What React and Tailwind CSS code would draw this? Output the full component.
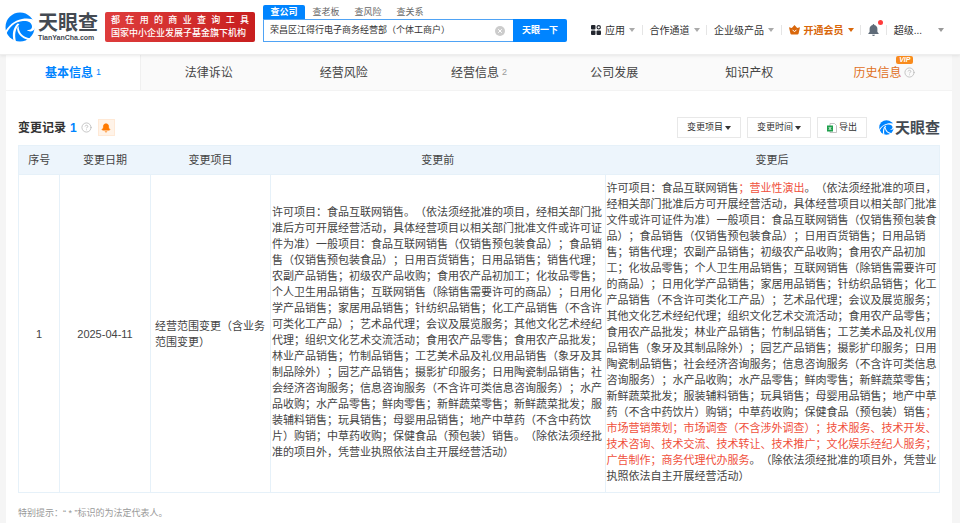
import { Bell, CircleHelp } from 'lucide-react';

const searchTabs = ['查公司', '查老板', '查风险', '查关系'];

const sectionTabs = [
  { label: '基本信息', count: 1, active: true },
  { label: '法律诉讼' },
  { label: '经营风险' },
  { label: '经营信息', count: 2 },
  { label: '公司发展' },
  { label: '知识产权' },
  { label: '历史信息', vip: true }
];

const records = [
  {
    id: 1,
    date: '2025-04-11',
    item: '经营范围变更（含业务范围变更）',
    before:
      '许可项目：食品互联网销售。（依法须经批准的项目，经相关部门批准后方可开展经营活动，具体经营项目以相关部门批准文件或许可证件为准）一般项目：食品互联网销售（仅销售预包装食品）；食品销售（仅销售预包装食品）；日用百货销售；日用品销售；销售代理；农副产品销售；初级农产品收购；食用农产品初加工；化妆品零售；个人卫生用品销售；互联网销售（除销售需要许可的商品）；日用化学产品销售；家居用品销售；针纺织品销售；化工产品销售（不含许可类化工产品）；艺术品代理；会议及展览服务；其他文化艺术经纪代理；组织文化艺术交流活动；食用农产品零售；食用农产品批发；林业产品销售；竹制品销售；工艺美术品及礼仪用品销售（象牙及其制品除外）；园艺产品销售；摄影扩印服务；日用陶瓷制品销售；社会经济咨询服务；信息咨询服务（不含许可类信息咨询服务）；水产品收购；水产品零售；鲜肉零售；新鲜蔬菜零售；新鲜蔬菜批发；服装辅料销售；玩具销售；母婴用品销售；地产中草药（不含中药饮片）购销；中草药收购；保健食品（预包装）销售。（除依法须经批准的项目外，凭营业执照依法自主开展经营活动）',
    after: [
      { text: '许可项目：食品互联网销售' },
      { text: '；营业性演出', added: true },
      {
        text: '。（依法须经批准的项目，经相关部门批准后方可开展经营活动，具体经营项目以相关部门批准文件或许可证件为准）一般项目：食品互联网销售（仅销售预包装食品）；食品销售（仅销售预包装食品）；日用百货销售；日用品销售；销售代理；农副产品销售；初级农产品收购；食用农产品初加工；化妆品零售；个人卫生用品销售；互联网销售（除销售需要许可的商品）；日用化学产品销售；家居用品销售；针纺织品销售；化工产品销售（不含许可类化工产品）；艺术品代理；会议及展览服务；其他文化艺术经纪代理；组织文化艺术交流活动；食用农产品零售；食用农产品批发；林业产品销售；竹制品销售；工艺美术品及礼仪用品销售（象牙及其制品除外）；园艺产品销售；摄影扩印服务；日用陶瓷制品销售；社会经济咨询服务；信息咨询服务（不含许可类信息咨询服务）；水产品收购；水产品零售；鲜肉零售；新鲜蔬菜零售；新鲜蔬菜批发；服装辅料销售；玩具销售；母婴用品销售；地产中草药（不含中药饮片）购销；中草药收购；保健食品（预包装）销售'
      },
      {
        text: '；市场营销策划；市场调查（不含涉外调查）；技术服务、技术开发、技术咨询、技术交流、技术转让、技术推广；文化娱乐经纪人服务；广告制作；商务代理代办服务',
        added: true
      },
      { text: '。（除依法须经批准的项目外，凭营业执照依法自主开展经营活动）' }
    ]
  }
];

function LogoMark({ className }) {
  return (
    <svg viewBox="0 0 30 30" className={className} aria-hidden="true">
      <circle cx="15" cy="15" r="14.5" fill="#0084ff" />
      <path
        d="M1 23C4 15 10 9.5 18 9C23 8.6 26.5 10.5 27 14C27.3 17 25 18.6 22 18C24.5 20.6 29 19.5 30 16V9C27 6.5 22 6 17 7C9 8.6 3 14 0 20Z"
        fill="#fff"
      />
      <path d="M12.5 11.5C8 16 7 22 8.6 29L11 29.6C9.4 23 10 17 14.5 12Z" fill="#fff" />
      <path d="M13.6 14C13.6 20 17 25 25.4 26.4L24 28.2C16 26.4 11.8 21 12.2 16Z" fill="#fff" />
    </svg>
  );
}

function Caret({ className }) {
  return (
    <svg viewBox="0 0 6 4" className={`h-1 w-1.5 shrink-0 ${className}`} aria-hidden="true">
      <path d="M0 0h6L3 4z" fill="currentColor" />
    </svg>
  );
}

function Divider() {
  return <span className="h-2.5 w-px shrink-0 bg-[#e5e5e5]" />;
}

function Header() {
  return (
    <header className="relative flex h-[55px] items-end border-b border-[#eee] bg-white pr-4 pb-3 pl-[5px] shadow-[0_1px_3px_rgba(0,0,0,0.08)]">
      <a href="#" className="flex shrink-0 items-center gap-[3px]">
        <LogoMark className="size-[30px]" />
        <span className="flex w-[63px] flex-col">
          <span className="text-[20px] leading-5 font-bold text-[#444a52]">天眼查</span>
          <span className="font-['Liberation_Sans'] text-[7px] leading-[9px] font-bold text-[#444a52]">
            TianYanCha.com
          </span>
        </span>
      </a>

      <div className="ml-1 w-[150px] shrink-0 rounded-xs bg-linear-to-r from-[#de3c3c] to-[#c81e1e] px-1.5 py-0.5 text-[9px] leading-[13px] font-medium text-white">
        <p className="[text-align-last:justify]">都 在 用 的 商 业 查 询 工 具</p>
        <p className="whitespace-nowrap">国家中小企业发展子基金旗下机构</p>
      </div>

      <form className="ml-2 w-[304px] shrink-0" onSubmit={(event) => event.preventDefault()}>
        <div className="flex text-[9px] leading-[14px] text-[#666]">
          {searchTabs.map((tab, index) => (
            <button
              key={tab}
              type="button"
              className={`w-[42px] ${index === 0 ? 'rounded-t-xs bg-[#0084ff] font-bold text-white' : ''}`}
            >
              {tab}
            </button>
          ))}
        </div>
        <div className="flex h-[23px]">
          <div className="flex flex-1 items-center border border-r-0 border-[#4fa3f5] pr-2 pl-1.5">
            <input
              aria-label="搜索"
              defaultValue="荣昌区江得行电子商务经营部（个体工商户）"
              className="min-w-0 flex-1 text-[9px] text-[#333] outline-none"
            />
            <button type="button" aria-label="清空">
              <svg viewBox="0 0 10 10" className="size-2.5">
                <circle cx="5" cy="5" r="5" fill="#ccc" />
                <path d="M3.2 3.2l3.6 3.6M6.8 3.2L3.2 6.8" stroke="#fff" />
              </svg>
            </button>
          </div>
          <button type="submit" className="w-[54px] rounded-r-xs bg-[#0084ff] text-[9px] font-bold text-white">
            天眼一下
          </button>
        </div>
      </form>

      <nav className="ml-6 flex h-6 flex-1 items-center justify-between text-[10px] whitespace-nowrap text-[#333]">
        <button type="button" className="flex items-center gap-1">
          <svg viewBox="0 0 10 10" className="size-2.5" fill="#22262e" aria-hidden="true">
            <rect width="4.5" height="4.5" rx="1" />
            <rect y="5.5" width="4.5" height="4.5" rx="1" />
            <rect x="5.5" y="5.5" width="4.5" height="4.5" rx="1" />
            <circle cx="7.7" cy="2.3" r="1.7" fill="none" stroke="#22262e" strokeWidth="1.1" />
          </svg>
          应用
          <Caret className="text-[#aaa]" />
        </button>
        <Divider />
        <button type="button" className="flex items-center gap-1">
          合作通道
          <Caret className="text-[#aaa]" />
        </button>
        <Divider />
        <button type="button" className="flex items-center gap-1">
          企业级产品
          <Caret className="text-[#aaa]" />
        </button>
        <Divider />
        <button type="button" className="flex items-center gap-1 font-bold text-[#d9670b]">
          <svg viewBox="0 0 11 10" className="h-2.5 w-[11px]" aria-hidden="true">
            <path d="M0 2.2L2.8 3L5.5 0L8.2 3L11 2.2L9.6 8.6Q9.4 9.6 8.4 9.6H2.6Q1.6 9.6 1.4 8.6Z" fill="currentColor" />
            <path d="M3.6 4.8L5.5 6.8L7.4 4.8" fill="none" stroke="#fff" />
          </svg>
          开通会员
          <Caret />
        </button>
        <Divider />
        <button type="button" aria-label="消息" className="relative">
          <svg viewBox="0 0 11 12" className="h-3 w-[11px]" fill="#5f6b78" aria-hidden="true">
            <path d="M5.5 0C6 0 6.3.4 6.3.9C8.3 1.3 9.4 2.9 9.4 4.8V8L10.6 9.3V10H.4V9.3L1.6 8V4.8C1.6 2.9 2.7 1.3 4.7.9C4.7.4 5 0 5.5 0Z" />
            <path d="M4 10.8H7Q6.6 12 5.5 12Q4.4 12 4 10.8Z" />
          </svg>
          <span className="absolute -top-1 -right-1 size-[5px] rounded-full bg-[#ff3b3b]" />
        </button>
        <Divider />
        <button type="button" className="flex items-center gap-4">
          超级...
          <Caret className="text-[#999]" />
        </button>
      </nav>
    </header>
  );
}

function SectionTabs() {
  return (
    <nav className="grid h-9 grid-cols-7 border-b border-[#f3f3f3] bg-[#fafafa] text-[12px]">
      {sectionTabs.map((tab) => (
        <a
          key={tab.label}
          href="#"
          className={`flex items-center justify-center gap-[3px] ${
            tab.active ? 'border-r border-[#f0f0f0] bg-white font-bold' : ''
          } ${tab.vip ? 'text-[#e0701c]' : 'text-[#444]'}`}
        >
          <span className={`relative ${tab.active ? 'text-[#0084ff]' : ''}`}>
            {tab.label}
            {tab.vip ? (
              <span className="absolute -top-2 -right-3 rounded-xs bg-[#f98b1d] px-[3px] font-['Liberation_Sans'] text-[7px] leading-2 font-bold text-white italic">
                VIP
              </span>
            ) : null}
          </span>
          {tab.count ? (
            <span
              className={`font-['Liberation_Sans'] text-[9px] font-normal ${
                tab.active ? 'text-[#0084ff]' : 'text-[#999]'
              }`}
            >
              {tab.count}
            </span>
          ) : null}
          {tab.vip ? <CircleHelp className="size-[11px] text-[#bbb]" strokeWidth={1.8} /> : null}
        </a>
      ))}
    </nav>
  );
}

function FilterButton({ children }) {
  return (
    <button
      type="button"
      className="flex h-[21px] items-center gap-0.5 border border-[#e8e8e8] px-[9px] text-[9px] text-[#333]"
    >
      {children}
    </button>
  );
}

function Toolbar() {
  return (
    <div className="flex items-center justify-between">
      <div className="flex items-center gap-1">
        <h2 className="text-[12px] font-bold text-[#333]">变更记录</h2>
        <span className="font-['Liberation_Sans'] text-[12px] font-bold text-[#0084ff]">1</span>
        <CircleHelp className="size-[11px] text-[#bbb]" strokeWidth={1.8} />
        <button
          type="button"
          aria-label="订阅"
          className="ml-0.5 flex size-[17px] items-center justify-center border border-[#ffe9d6] bg-[#fff3e8]"
        >
          <Bell className="size-2.5 fill-[#ff7a00] text-[#ff7a00]" />
        </button>
      </div>
      <div className="flex items-center gap-1.5">
        <FilterButton>
          变更项目
          <Caret className="text-[#333]" />
        </FilterButton>
        <FilterButton>
          变更时间
          <Caret className="text-[#333]" />
        </FilterButton>
        <FilterButton>
          <svg viewBox="0 0 10 10" className="size-2.5" aria-hidden="true">
            <path d="M3 .5h4.5l2 2v7H3z" fill="#fff" stroke="#b5b5b5" strokeWidth="0.8" />
            <rect y="2.5" width="6" height="6" fill="#1fa04c" />
            <path d="M1.8 4l2.4 3M4.2 4L1.8 7" stroke="#fff" strokeWidth="0.8" />
          </svg>
          导出
        </FilterButton>
        <span className="ml-1.5 flex items-center gap-px">
          <LogoMark className="size-[15px]" />
          <span className="text-[15px] leading-4 font-bold text-[#444a52]">天眼查</span>
        </span>
      </div>
    </div>
  );
}

function ChangeTable() {
  return (
    <table className="mt-[7px] w-full table-fixed border-collapse text-[11px] leading-4 text-[#444] [&_td]:border [&_td]:border-[#e6f1f9]">
      <colgroup>
        <col className="w-[41px]" />
        <col className="w-[91px]" />
        <col className="w-[120px]" />
        <col />
        <col />
      </colgroup>
      <thead>
        <tr className="h-[29px] border border-[#e6f1f9] bg-[#edf5fc]">
          {['序号', '变更日期', '变更项目', '变更前', '变更后'].map((title) => (
            <th key={title} scope="col" className="font-normal">
              {title}
            </th>
          ))}
        </tr>
      </thead>
      <tbody>
        {records.map((record) => (
          <tr key={record.id}>
            <td className="text-center font-['Liberation_Sans']">{record.id}</td>
            <td className="text-center font-['Liberation_Sans']">{record.date}</td>
            <td className="px-1">{record.item}</td>
            <td className="px-px pt-[5px] pb-2">{record.before}</td>
            <td className="px-px pt-[5px] pb-2">
              {record.after.map((part) => (
                <span key={part.text} className={part.added ? 'text-[#f0503c]' : ''}>
                  {part.text}
                </span>
              ))}
            </td>
          </tr>
        ))}
      </tbody>
    </table>
  );
}

export default function App() {
  return (
    <div
      lang="zh-CN"
      className="min-h-screen bg-[#f5f5f5] font-['Liberation_Sans','Noto_Sans_CJK_SC',sans-serif] [text-spacing-trim:space-all]"
    >
      <Header />
      <main className="mr-2 ml-1.5 min-h-[468px] bg-white">
        <SectionTabs />
        <section className="pt-[26px] pr-3 pl-3">
          <Toolbar />
          <ChangeTable />
          <p className="mt-3 text-[9px] leading-4 text-[#999]">特别提示：“ * ”标识的为法定代表人。</p>
        </section>
      </main>
    </div>
  );
}
